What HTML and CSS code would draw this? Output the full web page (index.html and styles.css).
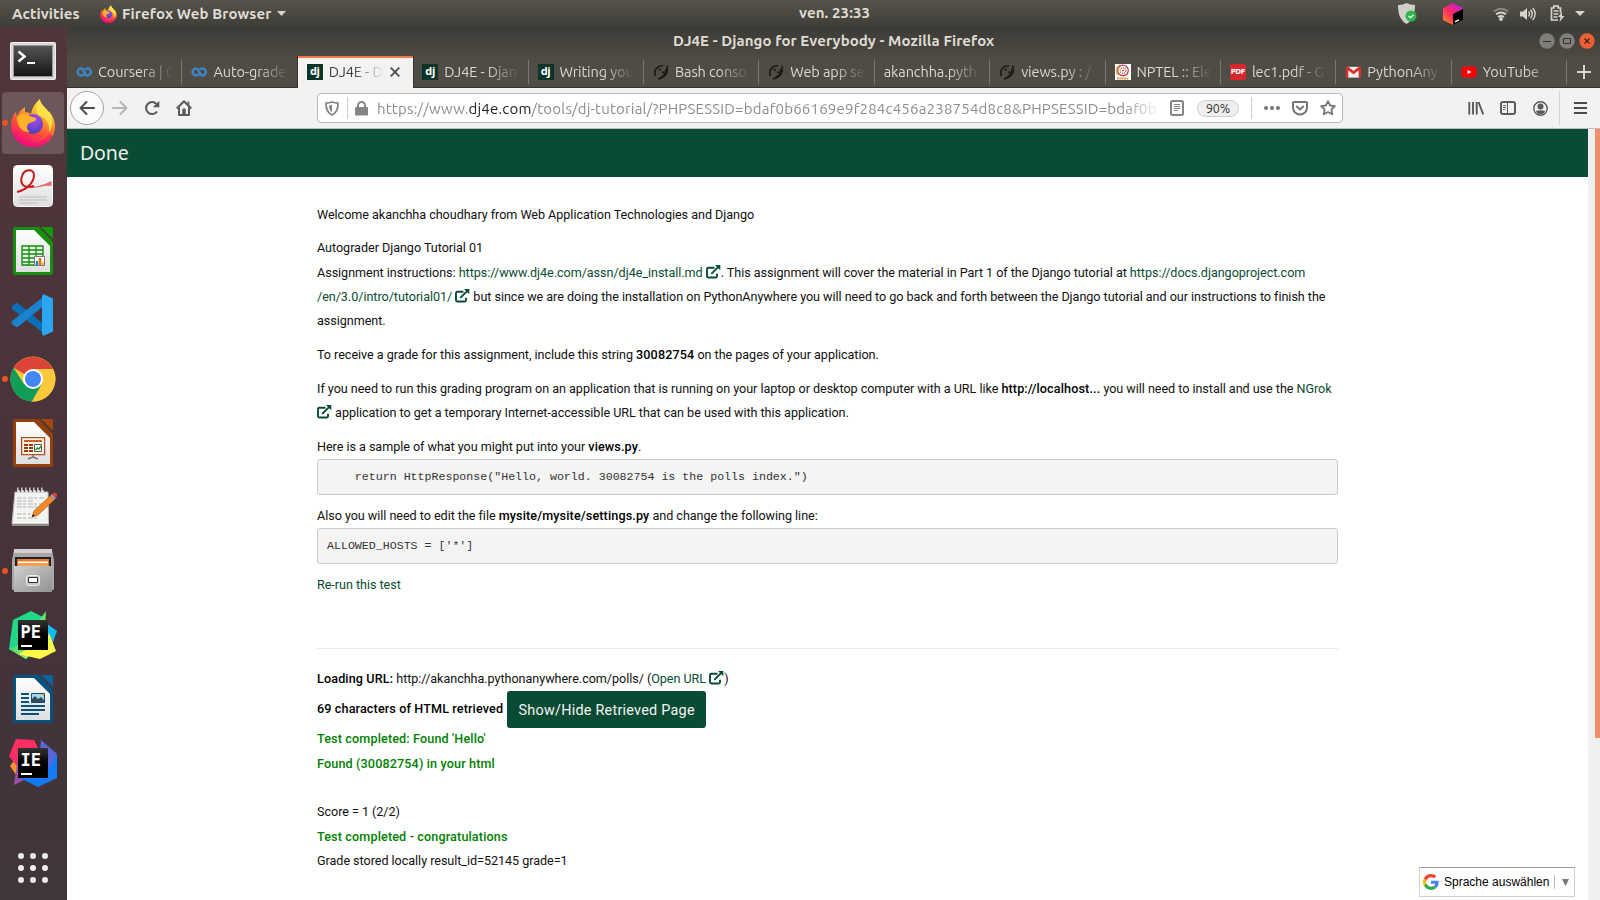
FILE: index.html
```html
<!DOCTYPE html>
<html lang="en">
<head>
<meta charset="utf-8">
<title>DJ4E - Django for Everybody</title>
<link rel="stylesheet" href="styles.css">
</head>
<body>
<svg class="defs" width="0" height="0">
  <defs>
    <linearGradient id="ffBody" x1=".75" y1="0" x2=".3" y2="1"><stop offset="0" stop-color="#fff44f"/><stop offset=".3" stop-color="#ffb32b"/><stop offset=".6" stop-color="#ff5634"/><stop offset=".9" stop-color="#f5156c"/></linearGradient>
    <radialGradient id="ffGlobe" cx=".55" cy=".3" r=".7"><stop offset="0" stop-color="#a94df5"/><stop offset="1" stop-color="#4b3fb8"/></radialGradient>
    <linearGradient id="paper" x1="0" y1="0" x2="0" y2="1"><stop offset="0" stop-color="#fff"/><stop offset="1" stop-color="#dedede"/></linearGradient>
    <linearGradient id="term" x1="0" y1="0" x2="0" y2="1"><stop offset="0" stop-color="#555"/><stop offset="1" stop-color="#151515"/></linearGradient>
    <linearGradient id="metal" x1="0" y1="0" x2="1" y2="1"><stop offset="0" stop-color="#cfcfcf"/><stop offset="1" stop-color="#929292"/></linearGradient>
    <linearGradient id="pen" x1="0" y1="0" x2="1" y2="1"><stop offset="0" stop-color="#21d789"/><stop offset=".5" stop-color="#5be26b"/><stop offset="1" stop-color="#fcf84a"/></linearGradient>
    <linearGradient id="cube" x1="0" y1="1" x2="1" y2="0"><stop offset="0" stop-color="#ff9b1a"/><stop offset=".45" stop-color="#ff2a62"/><stop offset="1" stop-color="#b01cf0"/></linearGradient>
    <linearGradient id="black" x1="0" y1="0" x2="0" y2="1"><stop offset="0" stop-color="#333"/><stop offset=".5" stop-color="#000"/></linearGradient>
    <symbol id="firefox" viewBox="0 0 46 48">
      <path fill="url(#ffBody)" d="M23 48C10 48 1 38 1 27 1 21 3 16 6 13l1 5c1-4 4-7 8-10v5c3 0 5 1 6 2 1-6 4-11 9-15 0 5 2 8 6 11l1 5c2-1 2-3 2-4 4 5 6 10 6 15 0 13-10 21-22 21z"/>
      <circle cx="23" cy="25" r="10" fill="url(#ffGlobe)"/>
      <path fill="#ffb12a" d="M7 18c4-4 8-4 13-1 3 2 6 1 6 3 0 3-6 3-8 5-2 3-1 6 2 8-8 1-13-6-13-15z"/>
      <path fill="#ffe14a" d="M30 0c0 6 8 9 11 17 2 6 1 12-2 16 1-7-1-12-7-15-7-3-7-11-2-18z"/>
      <path fill="none" stroke="#f0127a" stroke-width="4" opacity=".6" d="M5 35c7 14 28 15 36 1"/>
    </symbol>
    <symbol id="coursera" viewBox="0 0 16 16"><path fill="none" stroke="#3d83c6" stroke-width="2.500" d="M9.500 9.500C8.500 11 7 11.400 5 11.400a3.400 3.400 0 0 1 0-6.800C8.500 4.600 8 11.400 11.500 11.400a3.400 3.400 0 0 0 0-6.800c-1.200 0-2 .5-2.500 1.200"/></symbol>
    <symbol id="snake" viewBox="0 0 16 16"><path fill="none" stroke="#181815" stroke-width="1.600" stroke-linecap="round" d="M2.300 11.500C.5 6 4.500 1.500 9.500 1.800M14 2.300c1.500 6-2 11.200-8.500 12.500"/><path fill="none" stroke="#181815" stroke-width="1.300" d="M12.600 5c.3 4-1.600 6.800-4.600 8.300"/><circle cx="6.700" cy="5.700" r="1.100" fill="#181815"/><circle cx="10" cy="8.300" r="1.100" fill="#181815"/></symbol>
    <symbol id="ext" viewBox="0 0 15 14"><path fill="none" stroke="#0a4b33" stroke-width="1.900" d="M8.500 2.700H2.200Q1 2.700 1 4v7.300q0 1.200 1.200 1.200h7.600q1.200 0 1.200-1.200V8.800M5.300 8.800l7-7"/><path fill="#0a4b33" d="M9 0h5.300v5.300z"/></symbol>
  </defs>
</svg>

<header class="topbar">
  <span class="activities">Activities</span>
  <svg class="tb-ff" width="17" height="18"><use href="#firefox"/></svg>
  <span class="appname">Firefox Web Browser</span>
  <svg width="9" height="5"><path fill="#d5d3cd" d="M0 0h9L4.500 5z"/></svg>
  <span class="clock">ven. 23:33</span>
  <span class="tray">
    <svg width="20" height="22" viewBox="0 0 20 22"><path fill="#cfcfcb" d="M1 2c4 0 6-1 8.500-2 2.500 1 5 2 8.500 2 0 9-2 15-8.500 19C3 17 1 11 1 2z"/><circle cx="14" cy="13" r="5.500" fill="#2fb44a"/><path fill="none" stroke="#fff" stroke-width="1.300" d="M11.500 13l2 1.700 3-3"/></svg>
    <svg class="cube" width="20" height="22" viewBox="0 0 20 22"><path fill="url(#cube)" d="M10 0l10 5v12l-10 5-10-5V5z"/><path fill="#000" d="M10 11l10-5v11l-10 5z"/><path stroke="#fff" stroke-width="1.500" d="M12 18.800l4-2"/></svg>
    <svg class="wifi" width="16" height="14" viewBox="0 0 16 14"><g fill="none" stroke-width="1.900"><path stroke="#898781" d="M1 4.500q7-5.500 14 0"/><path stroke="#d5d3cd" d="M3 7.300q5-3.600 10 0M5 10q3-2 6 0"/></g><circle cx="8" cy="12" r="1.900" fill="#d5d3cd"/></svg>
    <svg class="sound" width="16" height="14" viewBox="0 0 16 14"><path fill="#d5d3cd" d="M0 4.500h3L7 1v12L3 9.500H0z"/><path fill="none" stroke="#d5d3cd" stroke-width="1.400" d="M8.500 4.500q2 2.500 0 5M10.500 2.800q3.500 4.200 0 8.400M12.700 1q5 6 0 12"/></svg>
    <svg class="batt" width="15" height="17" viewBox="0 0 15 17"><path fill="none" stroke="#d5d3cd" stroke-width="1.700" d="M8 15H1.500V3h2.300V1.200h4.400V3h2.300v5M3.500 6h5M3.500 9h5M3.500 12h4"/><path fill="#d5d3cd" d="M12 7l-4 5h2.500L9.500 17l5-6H12z"/></svg>
    <svg class="caret" width="10" height="5"><path fill="#d5d3cd" d="M0 0h10L5 5z"/></svg>
  </span>
</header>

<div class="desktop">
<nav class="dock">
  <div class="app"><svg width="48" height="48" viewBox="0 0 48 48"><rect x="1.500" y="7.500" width="45" height="37" rx="1" fill="#d9d9d9" stroke="#eee"/><rect x="4.500" y="10.500" width="39" height="31" fill="url(#term)" stroke="#999"/><path fill="none" stroke="#fff" stroke-width="2.500" d="M9.500 16.500l6 5-6 5"/><path stroke="#fff" stroke-width="2" d="M18 28h8"/></svg></div>
  <div class="app current"><svg width="46" height="48"><use href="#firefox"/></svg></div>
  <div class="app"><svg width="48" height="48" viewBox="0 0 48 48"><rect x="4.500" y="2.500" width="39" height="41" rx="4" fill="url(#paper)" stroke="#f8f8f8"/><path fill="none" stroke="#cc1719" stroke-width="2" d="M8 29c9-2 17-9 17-17 0-7-10-6-12 1-3 9 3 13 12 10"/><path fill="#d33" d="M16 24c10 1 18-2 26.500-6v5c-8-1-14 3-26.500 2z" opacity=".7"/><path stroke="#bbb" stroke-width="1.200" d="M10 34h28M10 37h28M10 40h18"/></svg></div>
  <div class="app"><svg width="48" height="48" viewBox="0 0 48 48"><path fill="#188f0a" d="M6 0h24l14 15v31q0 2-2 2H6q-2 0-2-2V2q0-2 2-2z"/><path fill="url(#paper)" d="M7 3h18l16 16v26H7z"/><path fill="#12980b" d="M32 0h10q2 0 2 2v10z"/><path fill="#eaffea" stroke="#128a0c" stroke-width="1.300" d="M13 19h21v19H13zM20 19v19M27 19v19M13 23h21M13 27h21M13 31h21M13 35h21"/><path fill="#fff" stroke="#777" d="M25.500 29.500h10v9h-10z"/><path stroke="#1685c7" stroke-width="2.500" d="M28 38v-4"/><path stroke="#e06a13" stroke-width="2.500" d="M31 38v-7"/><path stroke="#e9b81a" stroke-width="2" d="M33.700 38v-3"/></svg></div>
  <div class="app"><svg width="48" height="48" viewBox="0 0 48 48"><path fill="#0b6fb8" d="M3 15l4-3q1-.5 2 .3L37 35v9L3 18q-1-1.500 0-3z"/><path fill="#1a82cf" d="M3 33l4 3q1 .5 2-.3L37 13V4L3 30q-1 1.500 0 3z"/><path fill="#2ba6f2" d="M34 3l10 4.500v33L34 45l-1-3V6z"/></svg></div>
  <div class="app running"><svg width="48" height="48" viewBox="0 0 48 48"><circle cx="24" cy="24" r="22.500" fill="#fdc93c"/><path fill="#db4437" d="M24 24L4.500 12.800A22.500 22.500 0 0 1 44 14H24z"/><path fill="#109d58" d="M4.500 12.800A22.500 22.500 0 0 0 23 46.500L33 29 24 24 15 29z"/><path fill="#fdc93c" d="M24 14h20A22.500 22.500 0 0 1 23 46.500L33 29z"/><circle cx="24" cy="24" r="10" fill="#fff"/><circle cx="24" cy="24" r="8" fill="#4285f4"/></svg></div>
  <div class="app"><svg width="48" height="48" viewBox="0 0 48 48"><path fill="#91400e" d="M6 0h24l14 15v31q0 2-2 2H6q-2 0-2-2V2q0-2 2-2z"/><path fill="url(#paper)" d="M7 3h18l16 16v26H7z"/><path fill="#a1480c" d="M32 0h10q2 0 2 2v10z"/><path fill="#fff4ea" stroke="#b0501b" stroke-width="1.300" d="M12.600 18.600h23v17h-23z"/><path stroke="#c8622a" stroke-width="2" d="M15 22h18"/><path stroke="#8d3c10" stroke-width="2" stroke-dasharray="4 1" d="M15 26h9M15 29h9M15 32h9"/><path fill="#fff" stroke="#555" d="M25.500 25.500h7v7h-7z"/><path fill="none" stroke="#1ca01c" stroke-width="1.500" d="M26.500 31l2-2 1.500 1 2-3"/><path fill="none" stroke="#777" stroke-width="1.500" d="M24 36v2l-5 2M24 38l5 2"/></svg></div>
  <div class="app"><svg width="48" height="48" viewBox="0 0 48 48"><path fill="#f4f4f2" stroke="#bcbcb8" d="M6 9h33l.5 32H3z"/><path fill="#8b8b86" d="M3 41h37v2H3z"/><path fill="none" stroke="#fff" stroke-width="2" stroke-dasharray="2.500 1.500" d="M8 8h28"/><path fill="none" stroke="#ccc" stroke-width="5" stroke-dasharray="1.500 2.500" d="M8 7h28"/><path stroke="#b2b2b2" stroke-dasharray="5 1 3 2" d="M8 15h27M8 18h17M8 21h25M8 24h21M8 31h14M8 35h22"/><path fill="#f08a27" stroke="#b96211" stroke-width=".8" d="M23 34l2-6 16-15 4 4-16 15z"/><path fill="#99a" d="M41 13l2-2 4 4-2 2z"/><path fill="#e63b3b" d="M43 11q2-2 4-1 2 2 0 5z"/><path fill="#222" d="M23 34l1-3 2 2z"/></svg></div>
  <div class="app running"><svg width="48" height="48" viewBox="0 0 48 48"><path fill="#a7a7a7" d="M5 3q0-1 1-1h36q1 0 1 1l2 10v29q0 1-1 1H4q-1 0-1-1V13z"/><path fill="#d4ced2" d="M5 2h38v4H5z"/><path fill="#222" d="M6 10h36v10H6z"/><path fill="#e37933" d="M8 12h32v8H8z"/><path fill="#fff" d="M9 14.500h30V20H9z"/><path fill="#f3a04d" d="M9 16h30v4H9z"/><path fill="url(#metal)" d="M5 19h38v26H5z"/><rect x="17.500" y="28.500" width="13" height="10" rx="2" fill="#c4c4c4" stroke="#eee"/><path fill="#fff" stroke="#333" d="M19.500 30.500h9v5h-9z"/></svg></div>
  <div class="app"><svg width="48" height="48" viewBox="0 0 48 48"><path fill="#15bcf0" d="M34 10l14 10-5 14-14 2z"/><path fill="#21d789" d="M4 9L22 0l12 6 4 26-21 16L0 38z"/><path fill="url(#pen)" d="M37 0L12 34 0 38l17 10 19-30z"/><path fill="#fcf84a" d="M40 22l7 18-16 8-22-5 28-13z"/><path fill="url(#black)" d="M9 9h30v30H9z"/><path fill="#fff" d="M12 34h11v2H12z"/><text class="glyph" x="11.500" y="26.500">PE</text></svg></div>
  <div class="app"><svg width="48" height="48" viewBox="0 0 48 48"><path fill="#07517f" d="M6 0h24l14 15v31q0 2-2 2H6q-2 0-2-2V2q0-2 2-2z"/><path fill="url(#paper)" d="M7 3h18l16 16v26H7z"/><path fill="#0a639c" d="M32 0h10q2 0 2 2v10z"/><path stroke="#07517f" stroke-width="2" d="M12 19h8M12 23h8M12 27h8M12 31h24M12 35h24M12 39h18"/><path fill="#a7d6f5" stroke="#07517f" d="M22.500 18.500h13v9h-13z"/><path fill="#364b52" d="M23 27v-3l3-3 3 3 3-2 3 3v2z"/><path fill="#f0b52a" d="M32 19h3v3z"/></svg></div>
  <div class="app"><svg width="48" height="48" viewBox="0 0 48 48"><path fill="#f59331" d="M1 27l9-12 6 20-9 1z"/><path fill="#ff2f64" d="M7 0l18 1 6 12L10 30 0 17z"/><path fill="#9c4fa8" d="M5 46l4-28 20 16z"/><path fill="#5b65d6" d="M32 1l15 13v20L28 39z"/><path fill="#1479f5" d="M48 14v25l-19 9-18-9 26-5z"/><path fill="url(#black)" d="M9 9h30v30H9z"/><path fill="#fff" d="M12 34h11v2H12z"/><text class="glyph" x="11.500" y="26.500">IE</text></svg></div>
  <div class="allapps"><i></i><i></i><i></i><i></i><i></i><i></i><i></i><i></i><i></i></div>
</nav>

<main class="window">
  <div class="titlebar">
    <span class="wtitle">DJ4E - Django for Everybody - Mozilla Firefox</span>
    <span class="wbtns">
      <svg width="16" height="16"><circle cx="8" cy="8" r="7.700" fill="#807e78"/><path stroke="#33322e" d="M4 8.500h8"/></svg>
      <svg width="16" height="16"><circle cx="8" cy="8" r="7.700" fill="#807e78"/><path fill="none" stroke="#33322e" d="M4.500 5.500h7v5h-7z"/></svg>
      <svg width="16" height="16"><circle cx="8" cy="8" r="7.700" fill="#ec6135"/><path stroke="#4a2112" stroke-width="1.300" d="M5.500 5.500l5 5m0-5l-5 5"/></svg>
    </span>
  </div>
  <div class="tabs">
    <div class="tab"><svg class="fav"><use href="#coursera"/></svg><span>Coursera | C</span></div>
    <div class="tab nosep"><svg class="fav"><use href="#coursera"/></svg><span>Auto-grade</span></div>
    <div class="tab active"><b class="dj">dj</b><span>DJ4E - D</span><svg class="close" width="10" height="10"><path stroke="#4c4c4c" stroke-width="1.800" d="M.7.7l8.600 8.600m0-8.600L.7 9.300"/></svg></div>
    <div class="tab"><b class="dj">dj</b><span>DJ4E - Djan</span></div>
    <div class="tab"><b class="dj">dj</b><span>Writing you</span></div>
    <div class="tab"><svg class="fav"><use href="#snake"/></svg><span>Bash conso</span></div>
    <div class="tab"><svg class="fav"><use href="#snake"/></svg><span>Web app se</span></div>
    <div class="tab"><span>akanchha.pyth</span></div>
    <div class="tab"><svg class="fav"><use href="#snake"/></svg><span>views.py : /</span></div>
    <div class="tab"><svg class="fav" viewBox="0 0 16 16"><path fill="#fff" d="M0 0h16v16H0z"/><circle cx="8" cy="6.500" r="5.300" fill="none" stroke="#b03a48" stroke-width="1.200"/><circle cx="8" cy="6.500" r="2.800" fill="none" stroke="#c25a4e" stroke-width="1.300" stroke-dasharray="1.300 .8"/><circle cx="8" cy="6.500" r="1" fill="#c25a4e"/><path fill="none" stroke="#d9a33e" stroke-width="1.300" d="M3 11A6.500 6.500 0 0 1 5 1"/><path stroke="#d9943e" stroke-width="1.800" stroke-dasharray="1.800 .6" d="M2 14.500h12"/></svg><span>NPTEL :: Ele</span></div>
    <div class="tab"><b class="pdf">PDF</b><span>lec1.pdf - G</span></div>
    <div class="tab gm"><svg class="fav" viewBox="0 0 16 16"><path fill="#eee" d="M1 2.500h14v11.500H1z"/><path fill="#d6312b" d="M1 2.500h1.500L8 7l5.500-4.500H15q1 0 1 1V14h-2.500V6.500L8 10.500l-5.500-4V14H0V3.500q0-1 1-1z"/></svg><span>PythonAny</span></div>
    <div class="tab"><svg class="fav" viewBox="0 0 16 16"><rect y="2.500" x=".5" width="15" height="11" rx="3" fill="#f00"/><path fill="#fff" d="M6.500 6l4 2-4 2z"/></svg><span>YouTube</span></div>
    <div class="newtab"><svg width="14" height="14"><path stroke="#d5d3cd" stroke-width="2" d="M7 0v14M0 7h14"/></svg></div>
  </div>
  <div class="toolbar">
    <div class="back"><svg width="16" height="16"><path fill="none" stroke="#4c4c4c" stroke-width="2" stroke-linecap="round" stroke-linejoin="round" d="M15 8H1.500M7.500 2l-6 6 6 6"/></svg></div>
    <div class="tool"><svg width="16" height="16"><path fill="none" stroke="#b7b6b4" stroke-width="2" stroke-linecap="round" stroke-linejoin="round" d="M1 8h13.500M8.500 2l6 6-6 6"/></svg></div>
    <div class="tool"><svg width="16" height="16"><path fill="none" stroke="#5b5b5b" stroke-width="2.100" d="M13 11.500A6 6 0 1 1 12.500 4"/><path fill="#5b5b5b" d="M15.300.7v6.500H8.800z"/></svg></div>
    <div class="tool"><svg width="16" height="16"><path fill="none" stroke="#5b5b5b" stroke-width="2" stroke-linejoin="round" d="M.8 8.500L8 1.300l7.200 7.200M3 7.500V15h10V7.500"/><path fill="#5b5b5b" d="M6.300 15V9.500q0-1 1-1h1.400q1 0 1 1V15zM11.500 1.500h1.800V6l-1.800-2z"/></svg></div>
    <div class="urlbar">
      <svg class="shield" width="14" height="15" viewBox="0 0 14 15"><path fill="none" stroke="#858585" stroke-width="1.800" stroke-linejoin="round" d="M1 2.200Q4 2 7 1q3 1 6 1.200Q13.300 11 7 14 .7 11 1 2.200z"/><path fill="#858585" d="M7 3.800q-1.500.5-3 .6.200 5 3 6.800z"/></svg>
      <i class="vsep"></i>
      <svg class="lock" width="13" height="15" viewBox="0 0 13 15"><path fill="#858585" d="M1 6h11q1 0 1 1v6.500q0 1-1 1H1q-1 0-1-1V7q0-1 1-1z"/><path fill="none" stroke="#858585" stroke-width="2" d="M3 7V4.500a3.500 3.500 0 0 1 7 0V7"/></svg>
      <span class="url">https://www.<em>dj4e.com</em>/tools/dj-tutorial/?PHPSESSID=bdaf0b66169e9f284c456a238754d8c8&amp;PHPSESSID=bdaf0b</span>
      <svg class="reader" width="14" height="16"><rect x="1" y="1" width="12" height="14" rx="1.500" fill="none" stroke="#858585" stroke-width="2"/><path stroke="#858585" d="M4 4.500h6M4 6.500h6M4 8.500h6M4 10.500h4"/></svg>
      <span class="zoom">90%</span>
      <i class="vsep end"></i>
      <svg class="dots" width="16" height="4"><circle cx="2" cy="2" r="2"/><circle cx="8" cy="2" r="2"/><circle cx="14" cy="2" r="2"/></svg>
      <svg class="pocket" width="16" height="15"><path fill="none" stroke="#757575" stroke-width="2" d="M2 1h12q1 0 1 1v4.500a7 7 0 0 1-14 0V2q0-1 1-1z"/><path fill="none" stroke="#757575" stroke-width="2" stroke-linecap="round" d="M4.800 5.500L8 8.500l3.200-3"/></svg>
      <svg class="star" width="16" height="16"><path fill="none" stroke="#757575" stroke-width="1.800" stroke-linejoin="round" d="M8 1.200l2.100 4.300 4.800.7-3.500 3.300.9 4.800L8 12l-4.300 2.300.9-4.800L1.100 6.200l4.800-.7z"/></svg>
    </div>
    <div class="tool right"><svg width="16" height="14"><path stroke="#5b5b5b" stroke-width="1.900" d="M1.300 1v12.500M5 1v12.500M8.700 1v12.500M10.500 1l4.700 12.300"/></svg></div>
    <div class="tool"><svg width="16" height="14"><rect x="1" y="1" width="14" height="12" rx="2" fill="none" stroke="#5b5b5b" stroke-width="2"/><path stroke="#5b5b5b" d="M7.500 1v12M3 4.500h3M3 6.500h3M3 8.500h2"/></svg></div>
    <div class="tool"><svg width="15" height="15"><circle cx="7.500" cy="7.500" r="6.700" fill="none" stroke="#5b5b5b" stroke-width="1.400"/><circle cx="7.500" cy="5.500" r="3" fill="#5b5b5b"/><path fill="#5b5b5b" d="M2.800 10q4.700-1.500 9.400 0-1.700 3.300-4.700 3.300T2.800 10z"/></svg></div>
    <div class="menu"><svg width="13" height="12"><path stroke="#4c4c4c" stroke-width="2" d="M0 1h13M0 6h13M0 11h13"/></svg></div>
  </div>
  <div class="view">
    <div class="page">
      <div class="done">Done</div>
      <div class="content">
        <p>Welcome akanchha choudhary from Web Application Technologies and Django</p>
        <p>Autograder Django Tutorial 01<br>
        Assignment instructions: <a>https://www.dj4e.com/assn/dj4e_install.md <svg class="ext"><use href="#ext"/></svg></a>. This assignment will cover the material in Part 1 of the Django tutorial at <a>https://docs.djangoproject.com<br>/en/3.0/intro/tutorial01/ <svg class="ext"><use href="#ext"/></svg></a> but since we are doing the installation on PythonAnywhere you will need to go back and forth between the Django tutorial and our instructions to finish the<br>assignment.</p>
        <p>To receive a grade for this assignment, include this string <b>30082754</b> on the pages of your application.</p>
        <p>If you need to run this grading program on an application that is running on your laptop or desktop computer with a URL like <b>http://localhost...</b> you will need to install and use the <a>NGrok<br><svg class="ext"><use href="#ext"/></svg></a> application to get a temporary Internet-accessible URL that can be used with this application.</p>
        <p class="tight">Here is a sample of what you might put into your <b>views.py</b>.</p>
        <pre>    return HttpResponse("Hello, world. 30082754 is the polls index.")</pre>
        <p class="tight">Also you will need to edit the file <b>mysite/mysite/settings.py</b> and change the following line:</p>
        <pre>ALLOWED_HOSTS = ['*']</pre>
        <p class="rerun"><a>Re-run this test</a></p>
        <hr>
        <div><b>Loading URL:</b> http://akanchha.pythonanywhere.com/polls/ (<a>Open URL <svg class="ext"><use href="#ext"/></svg></a>)</div>
        <div class="retrieved"><b>69 characters of HTML retrieved</b><button class="btn">Show/Hide Retrieved Page</button></div>
        <div class="ok">Test completed: Found 'Hello'</div>
        <div class="ok">Found (30082754) in your html</div>
        <div class="score">Score = 1 (2/2)</div>
        <div class="ok">Test completed - congratulations</div>
        <div>Grade stored locally result_id=52145 grade=1</div>
      </div>
      <div class="translate">
        <svg width="16" height="16" viewBox="0 0 48 48"><path fill="#ea4335" d="M24 9.500c3.500 0 6.700 1.200 9.200 3.600l6.900-6.900C35.900 2.400 30.500 0 24 0 14.600 0 6.500 5.400 2.600 13.200l8 6.200C12.400 13.700 17.700 9.500 24 9.500z"/><path fill="#4285f4" d="M47 24.600c0-1.600-.2-3.100-.4-4.600H24v9h12.900c-.6 3-2.300 5.500-4.800 7.200l7.700 6C44.400 38 47 31.800 47 24.600z"/><path fill="#fbbc05" d="M10.500 28.600a14.500 14.500 0 0 1 0-9.200l-8-6.200a24 24 0 0 0 0 21.600z"/><path fill="#34a853" d="M24 48c6.500 0 11.900-2.100 15.900-5.800l-7.700-6c-2.200 1.500-4.900 2.300-8.200 2.300-6.300 0-11.600-4.200-13.500-9.900l-8 6.200C6.500 42.600 14.600 48 24 48z"/></svg>
        <span>Sprache auswählen</span><i></i><svg width="7" height="7"><path fill="#767676" d="M0 0h7L3.500 7z"/></svg>
      </div>
    </div>
    <div class="scroll"><div class="thumb"></div></div>
  </div>
</main>
</div>
</body>
</html>
```

FILE: styles.css
```css
* { box-sizing: border-box; }
body { margin: 0; width: 1600px; height: 900px; overflow: hidden; font-family: "Ubuntu", "Noto Sans", sans-serif; display: flex; flex-direction: column; }
svg { display: block; flex: none; }
.defs { position: absolute; }

.topbar { position: relative; height: 27px; flex: none; display: flex; align-items: center; background: linear-gradient(#57544c, #3e3d38); color: #dfdbd2; font-size: 15px; font-weight: 600; padding-left: 12px; white-space: nowrap; }
.activities { width: 88px; letter-spacing: .1px; }
.appname { margin-left: 5px; width: 155px; letter-spacing: .12px; }
.clock { position: absolute; left: 799px; top: 3px; line-height: 20px; letter-spacing: .1px; }
.tray { margin-left: auto; display: flex; align-items: center; padding-right: 15px; }
.cube { margin-left: 26px; }
.wifi { margin-left: 30px; }
.sound { margin-left: 11px; }
.batt { margin-left: 14px; }
.caret { margin-left: 10px; }

.desktop { display: flex; flex: 1; min-height: 0; }
.dock { width: 67px; flex: none; background: linear-gradient(#51363a, #48343a 45%, #43333a 80%, #403638); display: flex; flex-direction: column; align-items: center; padding-top: 0; }
.app { width: 61px; height: 64px; display: flex; align-items: center; justify-content: center; position: relative; flex: none; margin-left: -1px; }
.app.current::after, .app.running::after { content: ""; position: absolute; left: -1px; top: 29px; width: 6px; height: 6px; border-radius: 50%; background: #e95420; }
.app.current::before { content: ""; position: absolute; inset: 1px 0 1px -1px; border-radius: 4px; background: rgba(255,255,255,.17); }
.app.current svg { position: relative; }
.glyph { font: bold 17px "DejaVu Sans Mono", monospace; fill: #fff; }
.allapps { margin-top: 58px; display: grid; grid-template-columns: repeat(3, 6px); gap: 6px; margin-left: -1px; }
.allapps i { width: 6px; height: 6px; border-radius: 50%; background: #eee; }

.window { flex: 1; min-width: 0; display: flex; flex-direction: column; }
.titlebar { height: 29px; flex: none; background: linear-gradient(#3b3a36, #4d4a43); display: flex; align-items: center; padding: 0 5px 2px 606px; }
.wtitle { color: #dfdbd2; font-weight: 700; font-size: 15px; letter-spacing: .07px; white-space: nowrap; }
.wbtns { margin: 1px 0 0 auto; display: flex; gap: 4px; }

.tabs { height: 32px; flex: none; display: flex; background: #4f4c45; border-bottom: 1px solid #33322e; font-size: 14.500px; color: #dad7cf; }
.tab { width: 115.400px; flex: none; padding-left: 9px; display: flex; align-items: center; position: relative; }
.tab::after { content: ""; position: absolute; right: 0; top: 4px; width: 1px; height: 24px; background: #79766e; }
.tab.nosep::after, .tab.active::after { display: none; }
.fav { width: 16px; height: 16px; margin-right: 6px; }
.tab span { flex: 1; min-width: 0; overflow: hidden; white-space: nowrap; margin-right: 9px; letter-spacing: -.1px; -webkit-mask-image: linear-gradient(90deg, #000 calc(100% - 32px), transparent); mask-image: linear-gradient(90deg, #000 calc(100% - 32px), transparent); }
.tab.active { background: #f3f2f1; border-top: 2px solid #f07746; color: #3c3c3c; margin-bottom: -1px; box-shadow: -1px 0 #33322e, 1px 0 #33322e; padding-bottom: 3px; }
.tab.active span { margin-right: 6px; }
.close { margin-right: 13px; }
.dj { width: 16px; height: 16px; margin-right: 6px; background: #0c3427; color: #fff; font: bold 11px/14px "Open Sans", sans-serif; text-align: center; letter-spacing: -.3px; flex: none; }
.pdf { width: 16px; height: 16px; margin-right: 6px; background: #d9272d; border-radius: 2px; color: #fff; font: bold 7px/16px "DejaVu Sans", sans-serif; text-align: center; flex: none; letter-spacing: -.4px; }
.tab.gm .fav { margin-left: 1px; width: 15px; margin-right: 6px; }
.newtab { flex: 1; display: flex; align-items: center; justify-content: center; }

.toolbar { height: 41px; flex: none; background: #f3f2f1; border-bottom: 1px solid #bfbdbb; display: flex; align-items: center; padding-left: 3px; }
.back { width: 34px; height: 34px; border: 1px solid #a5a4a3; border-radius: 50%; background: #fcfcfc; display: flex; align-items: center; justify-content: center; }
.tool { width: 32px; display: flex; justify-content: center; }
.urlbar { margin-left: 117px; width: 1026px; height: 30px; border: 1px solid #bdbbb9; border-radius: 4px; background: #fff; display: flex; align-items: center; }
.shield { margin-left: 7px; }
.vsep { width: 1px; height: 22px; background: #cfcecd; margin: 0 7px 0 8px; }
.lock { margin-right: 9px; }
.url { width: 785px; overflow: hidden; white-space: nowrap; font-size: 15px; color: #8c8c8c; letter-spacing: .2px; -webkit-mask-image: linear-gradient(90deg, #000 95%, transparent); mask-image: linear-gradient(90deg, #000 95%, transparent); }
.url em { font-style: normal; color: #222; }
.reader { margin-left: 8px; }
.zoom { margin-left: 13px; width: 42px; height: 17px; border: 1px solid #ccc; border-radius: 9px; background: #efefef; font-size: 12.500px; line-height: 14px; text-align: center; color: #333; letter-spacing: -.2px; }
.vsep.end { margin: 0 12px; }
.dots { fill: #757575; }
.pocket { margin-left: 12px; }
.star { margin-left: 12px; }
.right { margin-left: 117px; }
.menu { margin-left: 3px; height: 34px; flex: 1; border-left: 1px solid #d4d3d1; display: flex; align-items: center; justify-content: center; }

.view { flex: 1; min-height: 0; display: flex; }
.page { flex: 1; background: #fff; position: relative; overflow: hidden; }
.done { height: 48px; background: #0a4b33; color: #eee; font: 19.500px/48px "Noto Sans", sans-serif; letter-spacing: -.15px; padding-left: 13px; }
.scroll { width: 12px; background: #f0efee; padding-left: 7px; }
.thumb { height: 609px; background: #f08e6b; }
.content { width: 1021px; margin: 25.700px 0 0 250px; font-family: Roboto, sans-serif; font-size: 12.600px; line-height: 24.300px; letter-spacing: -.04px; color: #111; }
.content p { margin: 0 0 9.450px; white-space: nowrap; }
.content p.tight { margin: 0; }
.content b { font-weight: 500; color: #000; letter-spacing: .13px; }
.content a { color: #0a4b33; }
.ext { display: inline-block; width: 15px; height: 14px; vertical-align: -2px; }
pre { margin: 0 0 9.400px; height: 35.400px; border: 1px solid #ccc; border-radius: 3px; background: #f4f4f4; padding: 0 9px; font: 11.610px/33px "Liberation Mono", monospace; letter-spacing: 0; color: #333; }
hr { border: 0; border-top: 1px solid #eaeaea; margin: 50.500px 0 18px; }
.content p.rerun { margin: 0; }
.retrieved { display: flex; align-items: flex-start; height: 36.400px; gap: 4px; }
.retrieved b { line-height: 36px; }
.btn { width: 199px; height: 37px; border: 0; border-radius: 3px; background: #0a4b33; color: #f4f4f4; font: 14.400px Roboto, sans-serif; letter-spacing: .25px; padding: 1px 0 0; }
.content .ok { color: #008000; font-weight: 500; letter-spacing: .14px; }
.score { margin-top: 24.300px; }
.translate { position: absolute; left: 1352px; top: 738px; width: 156px; height: 30px; border: 1px solid #d0d0d0; border-top-color: #9b9b9b; background: #fff; display: flex; align-items: center; padding-left: 3px; font: 12px "Liberation Sans", sans-serif; color: #000; white-space: nowrap; }
.translate span { margin-left: 5px; width: 105px; }
.translate i { width: 1px; height: 14px; background: #bbb; margin: 0 7px 0 5px; }
```
